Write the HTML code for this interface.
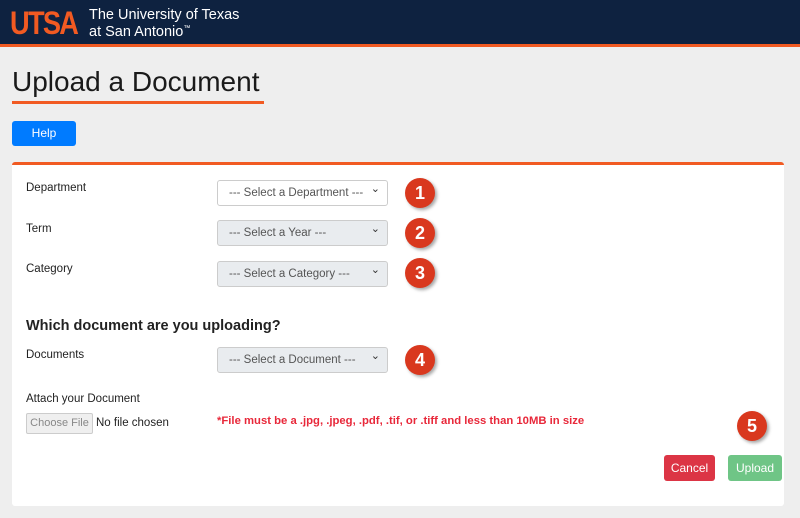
<!DOCTYPE html>
<html><head><style>
*{box-sizing:border-box;margin:0;padding:0}
body{width:800px;height:518px;background:#eeeeee;font-family:"Liberation Sans",sans-serif;position:relative;overflow:hidden;color:#222}
.hdr{position:absolute;left:0;top:0;width:800px;background:#0e2240;border-bottom:3px solid #f15a22;height:47px}
.logo{position:absolute;left:10px;top:5px;font-size:32px;font-weight:bold;color:#f15a22;letter-spacing:-2px;transform:scaleX(.85);transform-origin:left}
.uni{position:absolute;left:89px;top:8px;color:#fff;font-size:14.5px;line-height:14px}
h1{position:absolute;left:12px;top:66px;font-size:28px;font-weight:normal;color:#1a1a1a;border-bottom:3px solid #f15a22;padding-bottom:3px;width:252px;white-space:nowrap}
.help{position:absolute;left:12px;top:121px;width:64px;height:25px;background:#007bff;color:#fff;border-radius:3px;font-size:12px;text-align:center;line-height:25px}
.card{position:absolute;left:12px;top:162px;width:772px;height:344px;background:#fff;border-top:3px solid #f15a22;border-radius:3px}
.lbl{position:absolute;left:26px;font-size:11.5px;color:#222}
.sel{position:absolute;left:217px;width:171px;height:26px;border:1px solid #ccc;border-radius:3px;background:#e9ecef;font-size:11.5px;color:#555;padding-left:11px;line-height:24px}
.sel:after{content:"⌄";position:absolute;right:7px;top:-4px;font-size:11px;color:#333}
.b{position:absolute;width:30px;height:30px;border-radius:50%;background:#d9381e;color:#fff;font-weight:bold;font-size:18px;text-align:center;line-height:30px;box-shadow:2px 2px 3px rgba(0,0,0,.35)}
.btn{position:absolute;top:455px;height:26px;border-radius:3px;color:#fff;font-size:12px;text-align:center;line-height:26px}
</style></head><body>
<div class="hdr"><div class="logo">UTSA</div><div class="uni">The University of Texas<br>at San Antonio<sup style="font-size:7px">™</sup></div></div>
<h1>Upload a Document</h1>
<div class="help">Help</div>
<div class="card"></div>
<div class="lbl" style="top:182px">Department</div>
<div class="sel" style="top:180px;background:#fff">--- Select a Department ---</div>
<div class="b" style="left:405px;top:178px">1</div>
<div class="lbl" style="top:223px">Term</div>
<div class="sel" style="top:220px">--- Select a Year ---</div>
<div class="b" style="left:405px;top:218px">2</div>
<div class="lbl" style="top:263px">Category</div>
<div class="sel" style="top:261px">--- Select a Category ---</div>
<div class="b" style="left:405px;top:258px">3</div>
<div style="position:absolute;left:26px;top:318px;font-size:14.5px;font-weight:bold;color:#222">Which document are you uploading?</div>
<div class="lbl" style="top:349px">Documents</div>
<div class="sel" style="top:347px">--- Select a Document ---</div>
<div class="b" style="left:405px;top:345px">4</div>
<div class="lbl" style="top:393px">Attach your Document</div>
<div style="position:absolute;left:26px;top:413px;width:67px;height:21px;border:1px solid #ccc;background:#efefef;border-radius:2px;font-size:11px;color:#888;text-align:center;line-height:19px">Choose File</div>
<div style="position:absolute;left:96px;top:417px;font-size:11.5px">No file chosen</div>
<div style="position:absolute;left:217px;top:415px;font-size:11.3px;font-weight:bold;color:#e8283a">*File must be a .jpg, .jpeg, .pdf, .tif, or .tiff and less than 10MB in size</div>
<div class="b" style="left:737px;top:411px">5</div>
<div class="btn" style="left:664px;width:51px;background:#dc3545">Cancel</div>
<div class="btn" style="left:728px;width:54px;background:#6fc586">Upload</div>
</body></html>
